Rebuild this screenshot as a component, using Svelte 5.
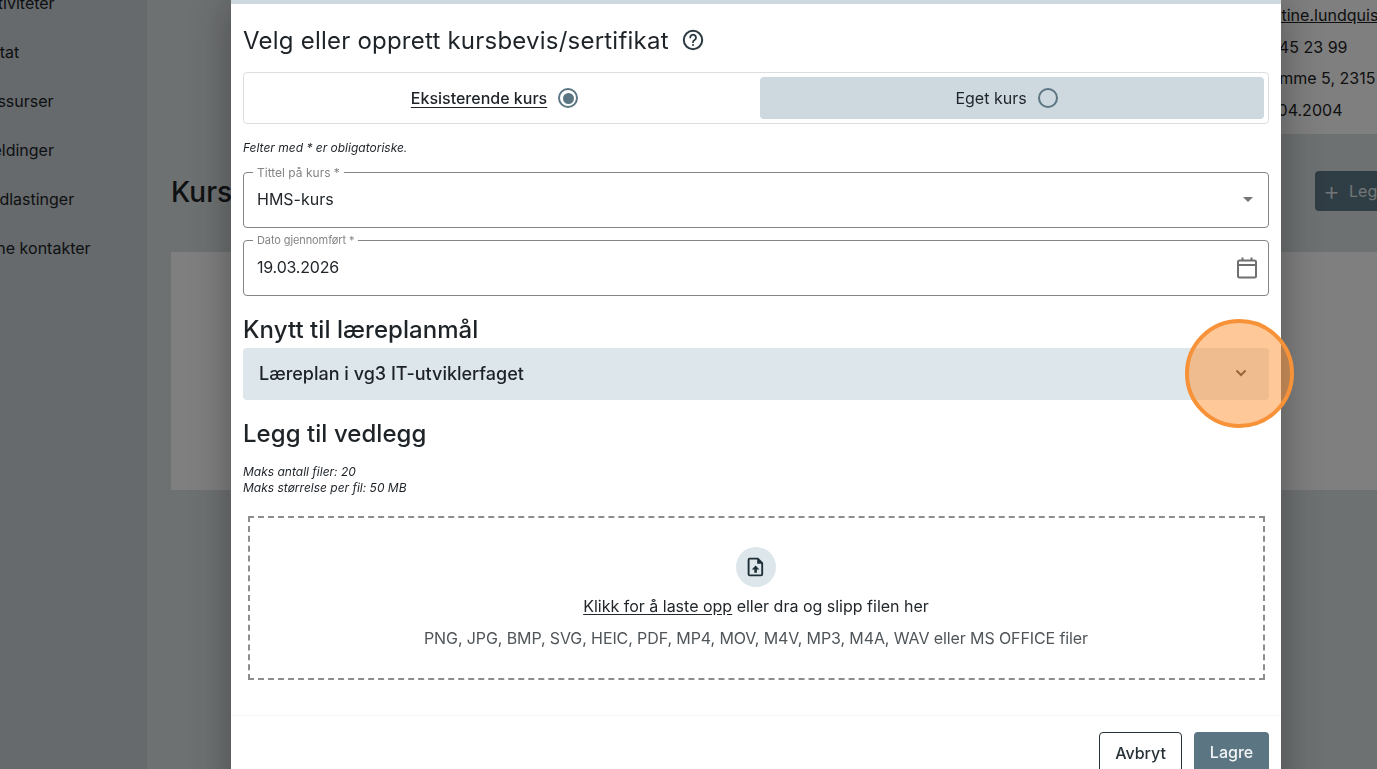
<script>
  const nav = ['Aktiviteter', 'Notat', 'Ressurser', 'Meldinger', 'Nedlastinger', 'Mine kontakter'];
  const info = ['kristine.lundquist@', '46 45 23 99', 'Hjemme 5, 2315 Hamar', '28.04.2004'];
</script>

<div class="page">
  <aside class="sidebar">
    {#each nav as item}
      <div class="nav-item">{item}</div>
    {/each}
  </aside>
  <main class="main">
    <section class="profile">
      <a class="info" href="#top">{info[0]}</a>
      <div class="info">{info[1]}</div>
      <div class="info">{info[2]}</div>
      <div class="info">{info[3]}</div>
    </section>
    <div class="heading-row">
      <h2 class="bg-title">Kurs</h2>
      <button class="add-btn"><span class="plus">+</span>Legg til</button>
    </div>
    <section class="bg-card"></section>
  </main>
</div>

<div class="scrim">
  <div class="modal">
    <div class="strip"></div>
    <div class="body">
      <div class="title-row">
        <h1>Velg eller opprett kursbevis/sertifikat</h1>
        <svg class="help" width="24" height="24" viewBox="0 0 24 24" fill="none" stroke="#2c3b43" stroke-width="2">
          <circle cx="12" cy="12" r="9.2" />
          <path d="M9.2 9.6a2.9 2.9 0 1 1 4.4 2.5c-1 .6-1.6 1.2-1.6 2.2" stroke-width="1.8" stroke-linecap="round" />
          <circle cx="12" cy="17" r="1" fill="#2c3b43" stroke="none" />
        </svg>
      </div>

      <div class="segment">
        <div class="seg-item">
          <span class="seg-active">Eksisterende kurs</span>
          <span class="radio on"></span>
        </div>
        <div class="seg-item selected">
          <span>Eget kurs</span>
          <span class="radio"></span>
        </div>
      </div>

      <p class="note req">Felter med * er obligatoriske.</p>

      <div class="field first">
        <span class="flabel">Tittel på kurs *</span>
        <span>HMS-kurs</span>
        <svg class="caret" width="10" height="5" viewBox="0 0 10 5"><path d="M0 0h10L5 5z" fill="#757575" /></svg>
      </div>

      <div class="field second">
        <span class="flabel small">Dato gjennomført *</span>
        <span class="date">19.03.2026</span>
        <svg width="24" height="24" viewBox="0 0 24 24" fill="none" stroke="#6f6f6f" stroke-width="2">
          <rect x="3" y="4.5" width="18" height="17" rx="1.5" />
          <path d="M3 9h18M7.5 1.5v3M16.5 1.5v3" />
        </svg>
      </div>

      <h3 class="knytt">Knytt til læreplanmål</h3>
      <div class="accordion">
        <span>Læreplan i vg3 IT-utviklerfaget</span>
        <svg width="12" height="8" viewBox="0 0 12 8" fill="none" stroke="#2c3b43" stroke-width="2"><path d="M1.5 1.5L6 6l4.5-4.5" /></svg>
      </div>

      <h3 class="legg">Legg til vedlegg</h3>
      <p class="note limits">Maks antall filer: 20<br />Maks størrelse per fil: 50 MB</p>

      <div class="drop">
        <div class="file-circle">
          <svg width="18" height="20" viewBox="0 0 18 20">
            <path d="M2.8 1.6h8l4.4 4.6v11a1.2 1.2 0 0 1-1.2 1.2H2.8a1.2 1.2 0 0 1-1.2-1.2V2.8a1.2 1.2 0 0 1 1.2-1.2z" fill="none" stroke="#1f2f38" stroke-width="1.9" />
            <path d="M10.2 1.6v5.2h5z" fill="#1f2f38" />
            <path d="M8.6 8.6l3.8 3.8H9.9v3.4H7.3v-3.4H4.8z" fill="#1f2f38" />
          </svg>
        </div>
        <p class="drop-main"><span class="u">Klikk for å laste opp</span> eller dra og slipp filen her</p>
        <p class="drop-sub">PNG, JPG, BMP, SVG, HEIC, PDF, MP4, MOV, M4V, MP3, M4A, WAV eller MS OFFICE filer</p>
      </div>
    </div>

    <div class="footer">
      <button class="btn ghost">Avbryt</button>
      <button class="btn primary">Lagre</button>
    </div>
  </div>
  <div class="highlight"></div>
</div>

<style>
  :global(html), :global(body) {
    margin: 0;
    height: 769px;
    overflow: hidden;
    background: #dde3e5;
    font-family: Inter, "Noto Sans", sans-serif;
    color: #1d2226;
  }
  * { box-sizing: border-box; }
  p, h1, h2, h3 { margin: 0; }

  .page {
    display: flex;
    width: 1377px;
    height: 769px;
    overflow: hidden;
  }
  .sidebar {
    flex: 0 0 147px;
    background: #ccd5d9;
    overflow: hidden;
  }
  .nav-item {
    height: 49px;
    line-height: 49px;
    font-size: 16px;
    margin-left: -22px;
    white-space: nowrap;
    transform: translateY(-21.5px);
  }
  .main {
    flex: 1;
    padding-left: 24px;
    min-width: 0;
    overflow: hidden;
  }
  .profile {
    height: 134px;
    background: #fff;
    margin-left: 200px;
    padding-left: 883px;
    margin-right: -20px;
  }
  .info {
    display: block;
    height: 31.6px;
    line-height: 31.6px;
    font-size: 16px;
    letter-spacing: 0.02px;
    color: #222;
    white-space: nowrap;
  }
  a.info { text-decoration: underline; }
  .heading-row {
    height: 118px;
    display: flex;
    align-items: center;
    justify-content: space-between;
  }
  .bg-title {
    font-size: 28px;
    font-weight: 500;
    line-height: 34px;
    margin-top: -2px;
  }
  .add-btn {
    height: 40px;
    width: 130px;
    margin-right: -68px;
    margin-top: -5px;
    border: 0;
    border-radius: 4px;
    background: #5f7a88;
    color: #e4ebee;
    font: 400 16px Inter, sans-serif;
    text-align: left;
    padding-left: 8px;
    white-space: nowrap;
  }
  .plus { font-size: 26px; line-height: 20px; font-weight: 300; vertical-align: -3px; margin-right: 9px; }
  .bg-card {
    height: 238px;
    background: #fff;
    margin-right: -20px;
  }

  .scrim {
    position: fixed;
    inset: 0;
    background: rgba(0, 0, 0, 0.5);
    overflow: hidden;
    display: flex;
    padding-left: 231px;
  }
  .modal {
    width: 1050px;
    height: 820px;
    flex: none;
    background: #fff;
    box-shadow: 0 0 42px rgba(0, 0, 0, 0.34);
    display: flex;
    flex-direction: column;
  }
  .strip {
    height: 4px;
    background: #cdd8df;
  }
  .body {
    padding: 0 12px;
    height: 712px;
    border-bottom: 1px solid #f3f4f5;
  }
  .title-row {
    height: 68px;
    display: flex;
    align-items: center;
    gap: 12px;
    padding-top: 4px;
  }
  h1 {
    font-size: 24px;
    font-weight: 400;
    letter-spacing: 0.22px;
    color: #1e2328;
  }
  .segment {
    height: 52px;
    border: 1px solid #dcdfe1;
    border-radius: 4px;
    padding: 4px;
    display: grid;
    grid-template-columns: 1fr 1fr;
    gap: 8px;
    font-size: 16px;
  }
  .seg-item {
    display: flex;
    align-items: center;
    justify-content: center;
    gap: 11px;
    padding-right: 11px;
    border-radius: 4px;
    color: #1e2328;
  }
  .seg-item.selected { background: #cdd8df; }
  .seg-active { text-decoration: underline; text-underline-offset: 3px; font-weight: 500; }
  .radio {
    width: 20px;
    height: 20px;
    border-radius: 50%;
    border: 2px solid #5c7583;
    position: relative;
  }
  .radio.on::after {
    content: "";
    position: absolute;
    inset: 2.5px;
    border-radius: 50%;
    background: #5c7583;
  }
  .note {
    font-size: 12px;
    font-style: italic;
    line-height: 16px;
    color: #1e2328;
  }
  .req { margin-top: 16px; margin-bottom: 16px; }
  .field {
    position: relative;
    height: 56px;
    border: 1px solid #858585;
    border-radius: 4px;
    display: flex;
    align-items: center;
    justify-content: space-between;
    padding: 0 13px 2px;
    font-size: 16px;
    color: #22272b;
  }
  .field.second { margin-top: 12px; padding-right: 9px; padding-bottom: 0; }
  .field.first { padding-right: 15px; }
  .date { letter-spacing: -0.2px; margin-bottom: 2px; }
  .flabel {
    position: absolute;
    left: 9px;
    top: -7px;
    padding: 0 4px;
    background: #fff;
    font-size: 12px;
    line-height: 13px;
    color: #858585;
  }
  .flabel.small { font-size: 11px; letter-spacing: -0.1px; }
  h3 {
    font-size: 24px;
    font-weight: 500;
    letter-spacing: 0.05px;
    line-height: 28px;
    color: #1e2328;
  }
  .knytt { margin-top: 20px; }
  .accordion {
    margin-top: 4px;
    height: 52px;
    border-radius: 4px;
    background: #dde6eb;
    display: flex;
    align-items: center;
    justify-content: space-between;
    padding: 0 22px 2px 16px;
    font-size: 18px;
    font-weight: 500;
  }
  .legg { margin-top: 20px; }
  .limits { margin-top: 16px; }
  .drop {
    margin: 20px 4px 0 5px;
    height: 164px;
    border: 2px dashed #8d8d8d;
    display: flex;
    flex-direction: column;
    align-items: center;
    padding-top: 29px;
    padding-right: 1px;
  }
  .file-circle {
    width: 40px;
    height: 40px;
    border-radius: 50%;
    background: #dde6eb;
    display: flex;
    align-items: center;
    justify-content: center;
  }
  .drop-main {
    margin-top: 7px;
    font-size: 16px;
    line-height: 24px;
    color: #22272b;
  }
  .u { text-decoration: underline; text-underline-offset: 2px; }
  .drop-sub {
    margin-top: 8px;
    font-size: 16px;
    letter-spacing: -0.1px;
    line-height: 24px;
    color: #4f5559;
  }
  .footer {
    display: flex;
    justify-content: flex-end;
    gap: 12px;
    padding: 16px 12px 0;
  }
  .btn {
    height: 44px;
    border-radius: 4px;
    font: 500 16px Inter, sans-serif;
    padding: 0 0 2px;
  }
  .ghost { width: 83px; background: #fff; border: 1px solid #263238; color: #263238; }
  .primary { width: 75px; background: #5c7583; border: 0; color: #f2f5f6; padding-bottom: 4px; }

  .highlight {
    position: absolute;
    left: 1185px;
    top: 319px;
    width: 109px;
    height: 109px;
    border-radius: 50%;
    border: 4px solid #f79239;
    background: rgba(255, 145, 50, 0.5);
  }
</style>
